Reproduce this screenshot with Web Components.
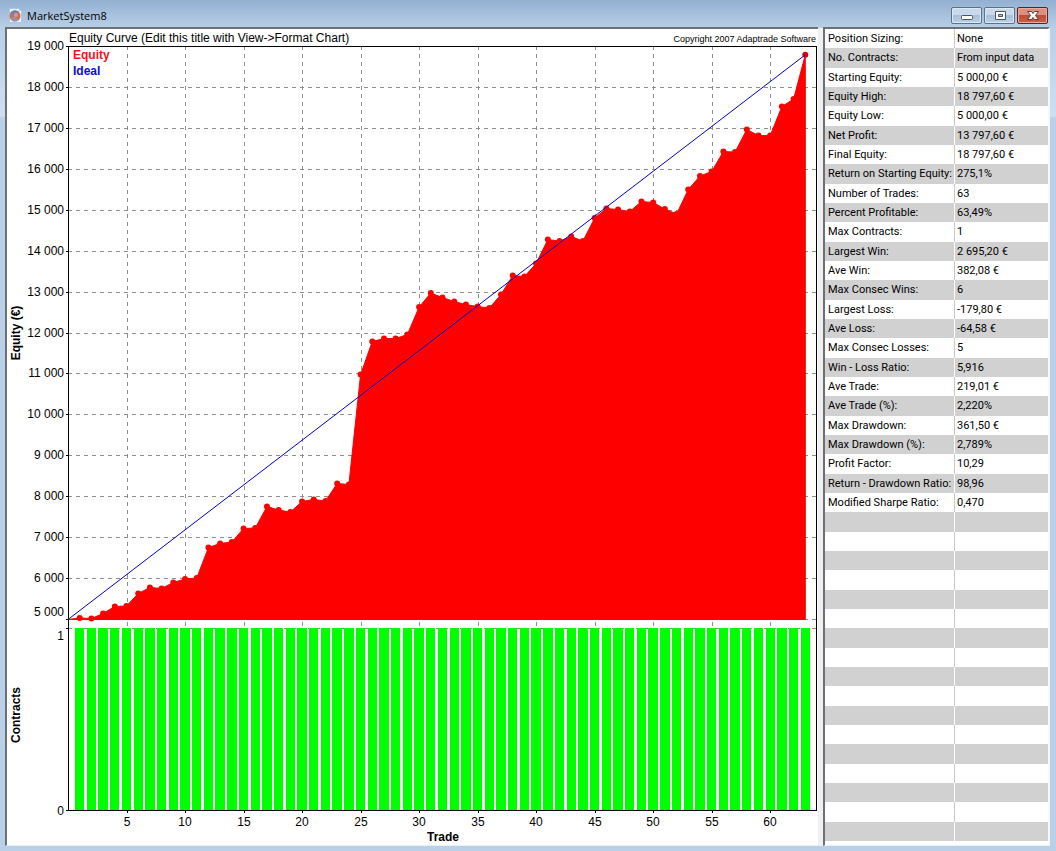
<!DOCTYPE html>
<html lang="en">
<head>
<meta charset="utf-8">
<title>MarketSystem8</title>
<style>
  html, body { margin: 0; min-height: 100vh; }
  body { display: flex; font-family: "Liberation Sans", Arial, sans-serif; color: #000; }
</style>
</head>
<body>
<app-window heading="MarketSystem8">
  <equity-chart slot="chart" heading="Equity Curve (Edit this title with View-&gt;Format Chart)" copyright="Copyright 2007 Adaptrade Software"></equity-chart>
  <stats-table slot="stats"></stats-table>
</app-window>

<template id="window-template">
  <style>
    :host { display: flex; flex-direction: column; flex: 1; min-width: 0; box-sizing: border-box; padding: 0 6px 5px 5px;
      background: linear-gradient(#93b0d1 0, #b9cfe7 28px, #cddff1 116px, #bad0e9 118px, #bad0e9 100%); }
    header { display: flex; height: 27px; padding: 0 2px 0 2px; }
    .icon { width: 16px; height: 16px; margin-top: 7px; }
    h1 { flex: 1; margin: 8px 0 0 4px; font: 11px/16px "Open Sans", "Noto Sans", sans-serif; }
    nav { display: flex; gap: 2px; margin-top: 7px; }
    main { flex: 1; display: flex; min-width: 0; }
    .pane { display: flex; border-top: 2px solid #6b7077; border-left: 2px solid #6b7077; border-bottom: 1px solid #e8eff7; background: #fff; }
    .chart { flex: 1; min-width: 0; }
    .split { width: 5px; background: #f0f0f0; border-bottom: 1px solid #e8eff7; border-top: 1px solid #c4ccd6; }
    .stats { flex: none; width: 223px; border-right: 2px solid #f4f8fc; }
    ::slotted(*) { flex: 1; min-width: 0; }
  </style>
  <header>
    <svg class="icon" viewBox="0 0 16 16" aria-hidden="true">
      <path d="M2.500 1.500h9l3 3v11h-12z" fill="#eef4fd" stroke="#a9c4ea"/>
      <path d="M11.500 1.500v3h3z" fill="#c3d8f3"/>
      <circle cx="8" cy="9" r="5.500" fill="#c9714f"/>
      <path d="M3 6.500a5.500 5.500 0 0 1 9-1.500L8 8.500z" fill="#6f83b5"/>
      <path d="M3 11a5.500 5.500 0 0 0 9 1.500L8 9.500z" fill="#9b8fae"/>
      <circle cx="9" cy="8" r="2" fill="#e29a77"/>
    </svg>
    <h1></h1>
    <nav aria-label="Window">
      <window-button kind="minimize"></window-button>
      <window-button kind="maximize"></window-button>
      <window-button kind="close"></window-button>
    </nav>
  </header>
  <main>
    <div class="pane chart"><slot name="chart"></slot></div>
    <div class="split"></div>
    <div class="pane stats"><slot name="stats"></slot></div>
  </main>
</template>

<template id="button-template">
  <style>
    :host { display: block; }
    button { display: flex; align-items: center; justify-content: center; box-sizing: border-box; width: 31px; height: 17px; padding: 0;
      border: 1px solid #5c7088; border-radius: 2px; box-shadow: inset 0 0 0 1px #dde9f5;
      background: linear-gradient(#c8d9eb 50%, #a8c0da 50%, #b9cfe6); }
    :host([kind="close"]) button { border-color: #5a2520; box-shadow: inset 0 0 0 1px #e9aca0;
      background: linear-gradient(#dd8f80 45%, #c04a33 50%, #c9614b); }
    svg { display: block; flex: none; }
  </style>
  <button type="button"><svg width="14" height="11" viewBox="0 0 14 11"></svg></button>
</template>

<template id="chart-template">
  <style>
    :host { display: flex; flex-direction: column; background: #fff; }
    header { display: flex; justify-content: space-between; height: 17px; padding: 0 2px 0 62px; white-space: nowrap; }
    h2 { margin: 0; font-size: 12px; line-height: 18px; font-weight: normal; }
    small { font-size: 9px; line-height: 20px; }
    svg { flex: 1; width: 100%; min-height: 0; overflow: visible; display: block; font-size: 12px; }
    .grid { stroke: #8e8e8e; stroke-dasharray: 4 4; shape-rendering: crispEdges; }
    .axis { stroke: #000; fill: none; shape-rendering: crispEdges; }
    .area { fill: #f00; stroke: #f00; stroke-linejoin: round; }
    .mark { fill: #f00; }
    .peak { fill: #e0000c; }
    .ideal { stroke: #0000c4; stroke-width: 1; }
    .bar { fill: #0f0; shape-rendering: crispEdges; }
    .end { text-anchor: end; }
    .mid { text-anchor: middle; }
    .bold { font-weight: bold; }
    .red { fill: #f0141e; }
    .blue { fill: #0a0ae6; }
  </style>
  <header><h2></h2><small></small></header>
  <svg role="img" aria-label="Equity curve and number of contracts by trade"></svg>
</template>

<template id="stats-template">
  <style>
    :host { display: block; background: #fff; padding-bottom: 3px; font-family: Roboto, "Liberation Sans", sans-serif; }
    table { width: 100%; border-collapse: separate; border-spacing: 0; table-layout: fixed; font-size: 11px; line-height: 16px; }
    col.name { width: 130px; }
    th, td { height: 19px; padding: 0 0 0 3px; font-weight: normal; text-align: left; white-space: nowrap; box-sizing: border-box; }
    th { border-right: 1px solid #c8c8c8; }
    td { padding-left: 2px; }
    tr:nth-child(3n+2) > * { height: 20px; }
    tr:nth-child(even) { background: #d1d1d1; }
    tr:nth-child(even) th { border-right-color: #fff; }
  </style>
  <table aria-label="Performance results"><colgroup><col class="name"><col></colgroup><tbody></tbody></table>
</template>

<script>
  const stamp = (host, id) => {
    const root = host.attachShadow({ mode: "open" });
    root.append(document.getElementById(id).content.cloneNode(true));
    return root;
  };

  class WindowButton extends HTMLElement {
    connectedCallback() {
      if (this.shadowRoot) return;
      const root = stamp(this, "button-template");
      const kind = this.getAttribute("kind");
      const glyphs = {
        minimize: '<rect x="1.500" y="5.500" width="11" height="4" rx="1" fill="#fff" stroke="#50545c"/>',
        maximize: '<path fill-rule="evenodd" d="M2.500 1.500h10v8h-10zM5.500 4.500v2h4v-2z" fill="#fff" stroke="#50545c"/>',
        close: '<path d="M1.500 1.500h4L7 3.500l1.500-2h4l-3 4 3 4h-4L7 7.500l-1.500 2h-4l3-4z" fill="#fff" stroke="#5b3a3c"/>'
      };
      root.querySelector("button").setAttribute("aria-label", kind);
      root.querySelector("svg").innerHTML = glyphs[kind];
    }
  }

  class AppWindow extends HTMLElement {
    connectedCallback() {
      if (this.shadowRoot) return;
      stamp(this, "window-template").querySelector("h1").textContent = this.getAttribute("heading");
    }
  }

  const EQUITY = [5000, 5037, 5024, 5147, 5318, 5330, 5635, 5782, 5757, 5904, 5989, 6014, 6759, 6857, 6893, 7223,
    7235, 7761, 7675, 7626, 7883, 7932, 7895, 8322, 8298, 10985, 11792, 11865, 11865, 11963, 12634, 12976,
    12866, 12769, 12695, 12647, 12610, 12940, 13404, 13380, 13697, 14283, 14247, 14357, 14247, 14809, 15041, 15016,
    14968, 15212, 15187, 15029, 14907, 15505, 15835, 15945, 16433, 16421, 16971, 16824, 16824, 17532, 17715, 18797.6];

  class EquityChart extends HTMLElement {
    connectedCallback() {
      if (this.shadowRoot) return;
      const root = stamp(this, "chart-template");
      root.querySelector("h2").textContent = this.getAttribute("heading");
      root.querySelector("small").textContent = this.getAttribute("copyright");
      this.svg = root.querySelector("svg");
      this.draw();
      new ResizeObserver(() => this.draw()).observe(this.svg);
    }
    draw() {
      const { width, height } = this.svg.getBoundingClientRect();
      if (!width || !height) return;
      const left = 61, right = Math.round(width) - 1, top = 0, bottom = Math.round(height) - 35;
      const barTop = bottom - Math.round(bottom * 0.238), base = barTop - 9;
      const x = n => left + (right - left) * n / 64;
      const y = v => base - (base - top) * (v - 5000) / 14000;
      const snap = n => Math.round(n) + 0.5;
      const line = (x1, y1, x2, y2, cls) => `<line class="${cls}" x1="${x1}" y1="${y1}" x2="${x2}" y2="${y2}"/>`;
      const text = (tx, ty, s, cls) => `<text x="${tx}" y="${ty}" class="${cls}">${s}</text>`;
      const side = (ty, s) => `<text class="bold mid" transform="translate(13 ${ty}) rotate(-90)">${s}</text>`;
      let out = "";
      for (let n = 5; n < 64; n += 5) {
        const gx = snap(x(n));
        out += line(gx, top, gx, barTop, "grid") + line(gx, bottom, gx, bottom + 3, "axis") + text(Math.round(x(n)), bottom + 16, n, "mid");
      }
      for (let v = 5000; v <= 19000; v += 1000) {
        const gy = snap(y(v));
        const label = `${v / 1000} 000`;
        if (v < 19000) out += line(left, gy, right, gy, "grid");
        out += line(left - 2, gy, left, gy, "axis") + text(left - 4, Math.round(y(v)) + (v === 5000 ? -3 : 4), label, "end");
      }
      out += line(left, barTop + 0.5, right, barTop + 0.5, "grid") + line(left - 2, barTop + 0.5, left, barTop + 0.5, "axis");
      out += text(left - 4, barTop + 12, "1", "end") + text(left - 4, bottom + 5, "0", "end") + line(left - 2, bottom + 0.5, left, bottom + 0.5, "axis");
      const points = EQUITY.map((v, n) => `${x(n)},${y(v) + 0.5}`);
      out += `<polygon class="area" points="${x(0)},${base + 0.5} ${points.join(" ")} ${x(63)},${base + 0.5}"/>`;
      EQUITY.forEach((v, n) => {
        if (n) out += `<circle class="mark${n === 63 ? " peak" : ""}" cx="${x(n)}" cy="${y(v) + 0.5}" r="3"/>`;
      });
      out += line(x(0), base + 0.5, x(63), y(18797.6) + 0.5, "ideal");
      for (let n = 1; n < 64; n++) {
        const pitch = (right - left) / 64;
        const a = Math.floor(x(n) + 0.5 - pitch * 0.4), b = Math.floor(x(n) + 0.5 + pitch * 0.4);
        out += `<rect class="bar" x="${a}" y="${barTop}" width="${b - a}" height="${bottom - barTop}"/>`;
      }
      out += `<rect class="axis" x="${left + 0.5}" y="${top + 0.5}" width="${right - left - 1}" height="${bottom - top}"/>`;
      out += text(left + 5, 13, "Equity", "bold red") + text(left + 5, 29, "Ideal", "bold blue");
      out += side(Math.round((top + base) / 2), "Equity (€)") + side(Math.round((barTop + bottom) / 2) - 4, "Contracts");
      out += text(Math.round((left + right) / 2), bottom + 31, "Trade", "bold mid");
      this.svg.innerHTML = out;
    }
  }

  const STATS = [
    ["Position Sizing:", "None"], ["No. Contracts:", "From input data"], ["Starting Equity:", "5 000,00 €"],
    ["Equity High:", "18 797,60 €"], ["Equity Low:", "5 000,00 €"], ["Net Profit:", "13 797,60 €"],
    ["Final Equity:", "18 797,60 €"], ["Return on Starting Equity:", "275,1%"], ["Number of Trades:", "63"],
    ["Percent Profitable:", "63,49%"], ["Max Contracts:", "1"], ["Largest Win:", "2 695,20 €"],
    ["Ave Win:", "382,08 €"], ["Max Consec Wins:", "6"], ["Largest Loss:", "-179,80 €"], ["Ave Loss:", "-64,58 €"],
    ["Max Consec Losses:", "5"], ["Win - Loss Ratio:", "5,916"], ["Ave Trade:", "219,01 €"], ["Ave Trade (%):", "2,220%"],
    ["Max Drawdown:", "361,50 €"], ["Max Drawdown (%):", "2,789%"], ["Profit Factor:", "10,29"],
    ["Return - Drawdown Ratio:", "98,96"], ["Modified Sharpe Ratio:", "0,470"]
  ];

  class StatsTable extends HTMLElement {
    connectedCallback() {
      if (this.shadowRoot) return;
      const body = stamp(this, "stats-template").querySelector("tbody");
      for (let i = 0; i < 42; i++) {
        const [name, value] = STATS[i] || ["", ""];
        const row = body.insertRow();
        const th = document.createElement("th");
        th.scope = "row";
        th.textContent = name;
        row.append(th);
        row.insertCell().textContent = value;
      }
    }
  }

  customElements.define("window-button", WindowButton);
  customElements.define("app-window", AppWindow);
  customElements.define("stats-table", StatsTable);
  customElements.define("equity-chart", EquityChart);
</script>
</body>
</html>
